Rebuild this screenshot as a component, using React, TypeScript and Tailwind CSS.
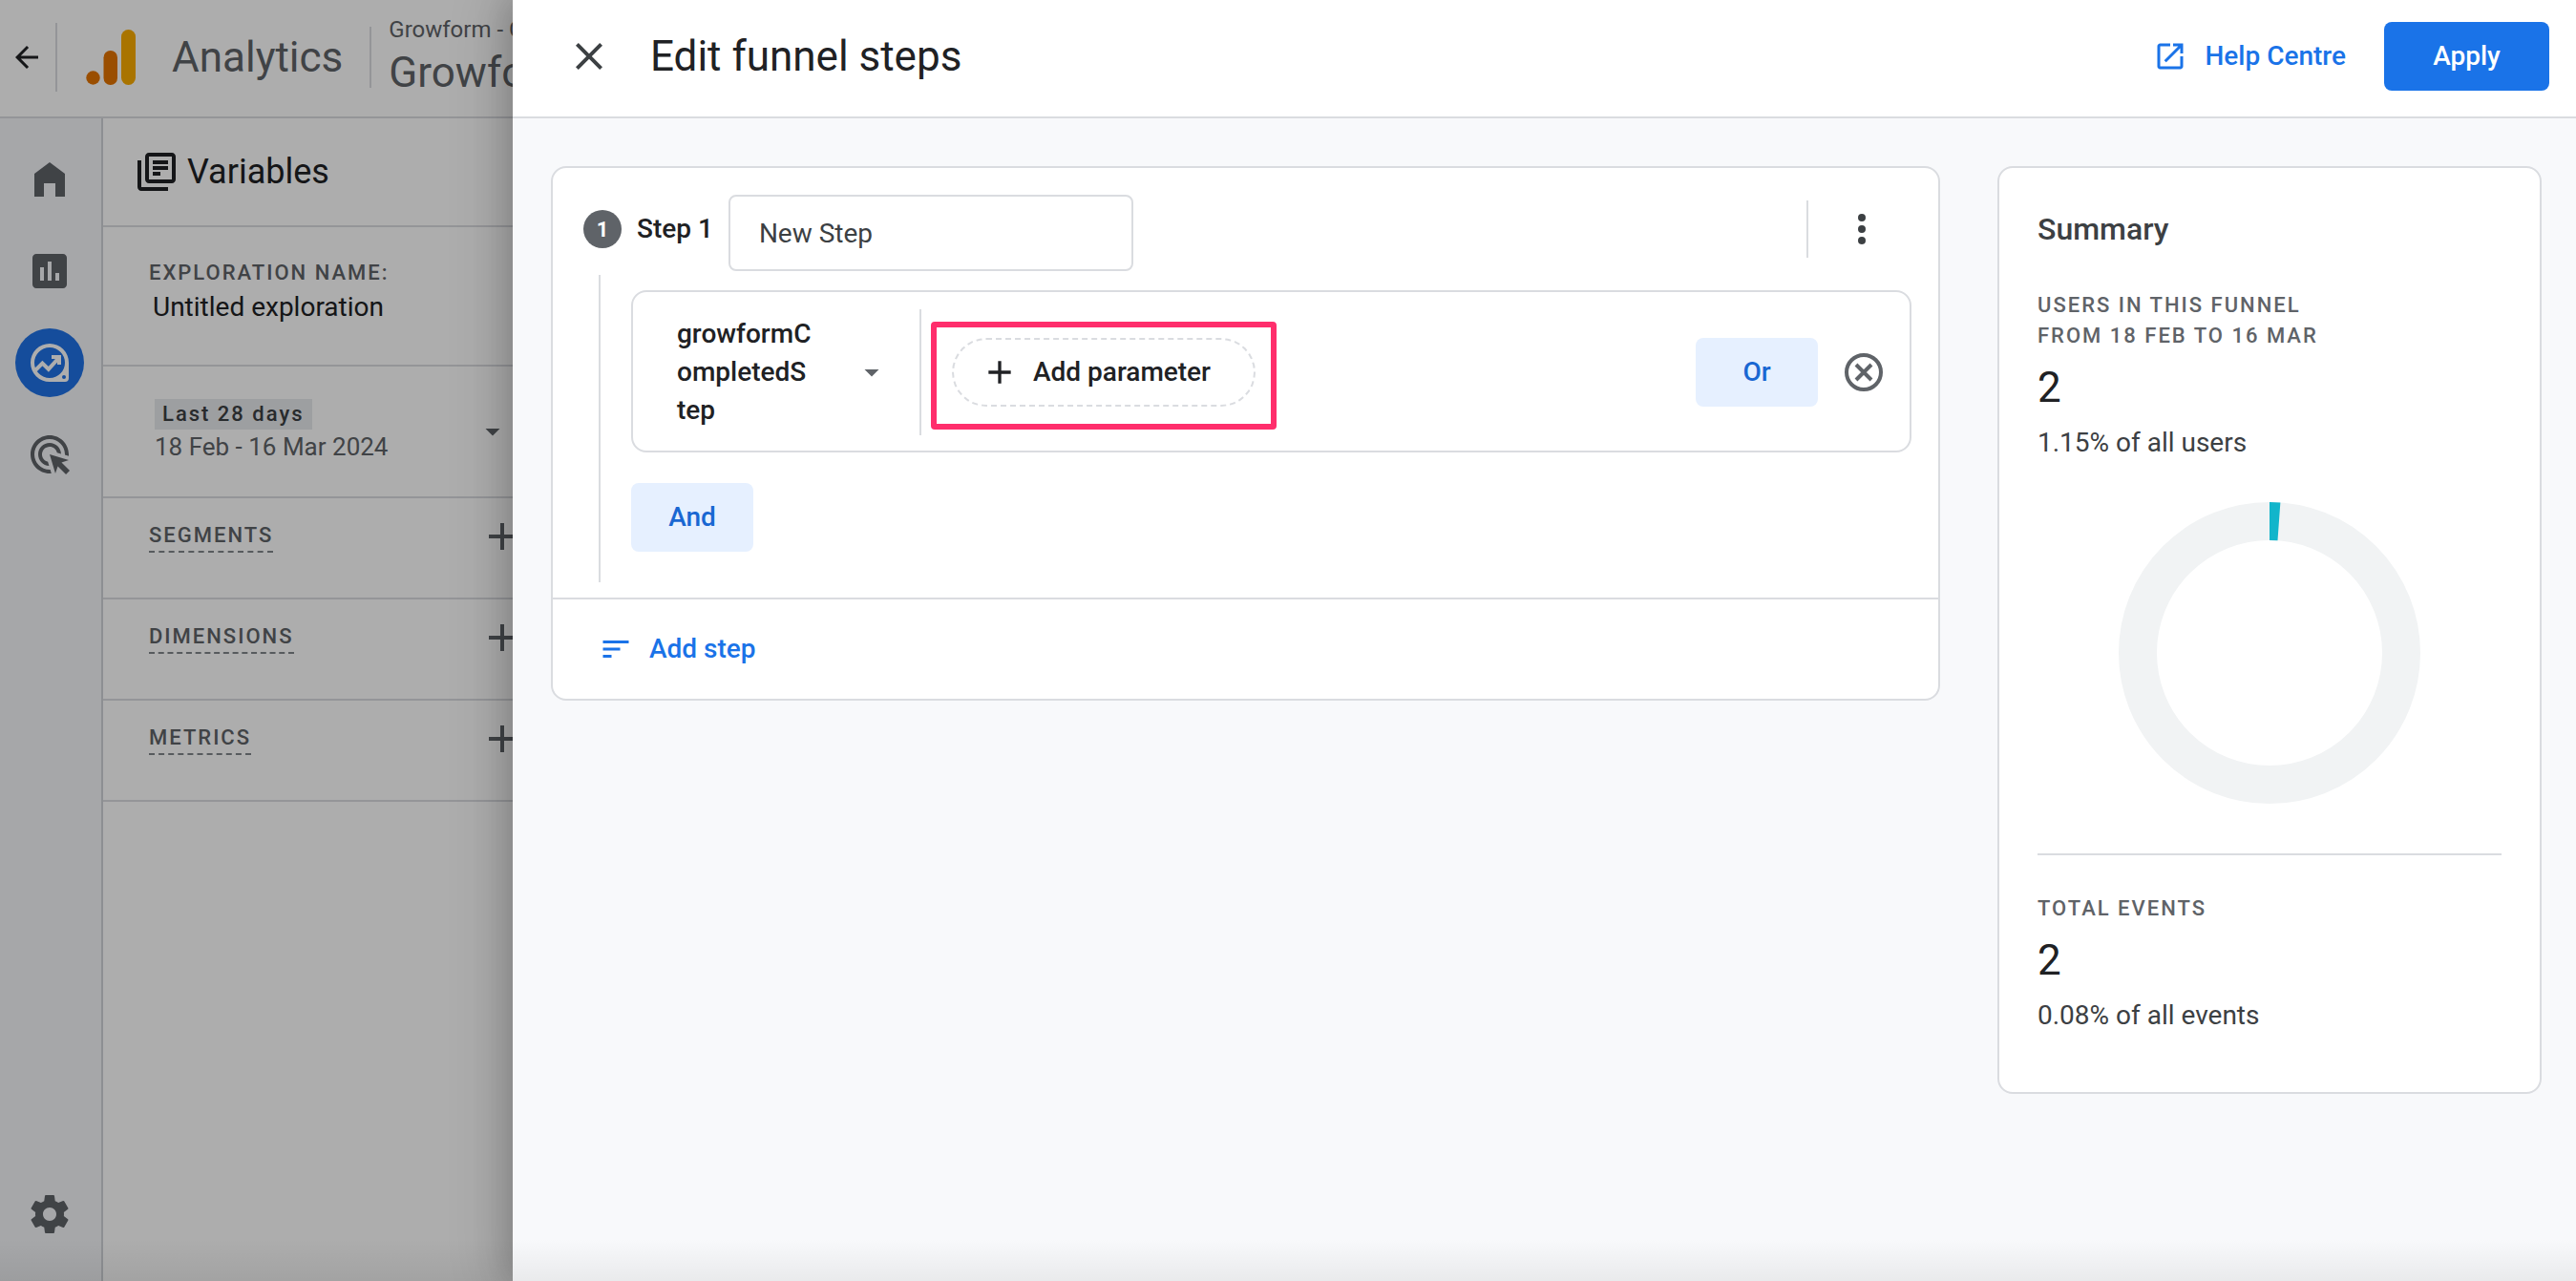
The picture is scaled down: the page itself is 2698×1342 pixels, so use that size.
import { type ReactNode, useState } from "react";

const icons = {
  back: "M20 11H7.83l5.59-5.59L12 4l-8 8 8 8 1.41-1.41L7.83 13H20v-2z",
  home: "M4 21V9l8-6 8 6v12h-5v-7H9v7z",
  chart:
    "M19 3H5c-1.1 0-2 .9-2 2v14c0 1.1.9 2 2 2h14c1.1 0 2-.9 2-2V5c0-1.1-.9-2-2-2zM9 17H7v-7h2v7zm4 0h-2V7h2v10zm4 0h-2v-4h2v4z",
  target:
    "M11.71 17.99C8.53 17.84 6 15.22 6 12c0-3.31 2.69-6 6-6 3.22 0 5.84 2.53 5.99 5.71l-2.1-.63C15.48 9.31 13.89 8 12 8c-2.21 0-4 1.79-4 4 0 1.89 1.31 3.48 3.08 3.89l.63 2.1zM22 12c0 .3-.01.6-.04.9l-1.97-.59c.01-.1.01-.21.01-.31 0-4.42-3.58-8-8-8s-8 3.58-8 8 3.58 8 8 8c.1 0 .21 0 .31-.01l.59 1.97c-.3.03-.6.04-.9.04-5.52 0-10-4.48-10-10S6.48 2 12 2s10 4.48 10 10zm-3.77 4.26L22 15l-10-3 3 10 1.26-3.77 4.27 4.27 1.98-1.98-4.28-4.26z",
  settings:
    "M19.43 12.98c.04-.32.07-.64.07-.98s-.03-.66-.07-.98l2.11-1.65c.19-.15.24-.42.12-.64l-2-3.46c-.12-.22-.39-.3-.61-.22l-2.49 1c-.52-.4-1.08-.73-1.69-.98l-.38-2.65C14.46 2.18 14.25 2 14 2h-4c-.25 0-.46.18-.49.42l-.38 2.65c-.61.25-1.17.59-1.69.98l-2.49-1c-.23-.09-.49 0-.61.22l-2 3.46c-.13.22-.07.49.12.64l2.11 1.65c-.04.32-.07.65-.07.98s.03.66.07.98l-2.11 1.65c-.19.15-.24.42-.12.64l2 3.46c.12.22.39.3.61.22l2.49-1c.52.4 1.08.73 1.69.98l.38 2.65c.03.24.24.42.49.42h4c.25 0 .46-.18.49-.42l.38-2.65c.61-.25 1.17-.59 1.69-.98l2.49 1c.23.09.49 0 .61-.22l2-3.46c.12-.22.07-.49-.12-.64l-2.11-1.65zM12 15.5c-1.93 0-3.5-1.57-3.5-3.5s1.57-3.5 3.5-3.5 3.5 1.57 3.5 3.5-1.57 3.5-3.5 3.5z",
  variables:
    "M4 6H2v14c0 1.1.9 2 2 2h14v-2H4V6zM20 2H8c-1.1 0-2 .9-2 2v12c0 1.1.9 2 2 2h12c1.1 0 2-.9 2-2V4c0-1.1-.9-2-2-2zm0 14H8V4h12v12zM10 6h8v2h-8zM10 9h8v2h-8zM10 12h4v2h-4z",
  plus: "M19 13h-6v6h-2v-6H5v-2h6V5h2v6h6z",
  close:
    "M19 6.41L17.59 5 12 10.59 6.41 5 5 6.41 10.59 12 5 17.59 6.41 19 12 13.41 17.59 19 19 17.59 13.41 12z",
  external:
    "M19 19H5V5h7V3H5c-1.11 0-2 .9-2 2v14c0 1.1.89 2 2 2h14c1.1 0 2-.9 2-2v-7h-2v7zM14 3v2h3.59l-9.83 9.83 1.41 1.41L19 6.41V10h2V3h-7z",
  caret: "M7 10l5 5 5-5z",
  more: "M12 8a2 2 0 1 0 0-4 2 2 0 0 0 0 4zm0 6a2 2 0 1 0 0-4 2 2 0 0 0 0 4zm0 6a2 2 0 1 0 0-4 2 2 0 0 0 0 4z",
  list: "M3 18h6v-2H3v2zM3 6v2h18V6H3zm0 7h12v-2H3v2z"
};

function Icon({
  name,
  className = "size-12"
}: {
  name: keyof typeof icons;
  className?: string;
}): ReactNode {
  return (
    <svg
      viewBox="0 0 24 24"
      fill="currentColor"
      aria-hidden="true"
      className={`shrink-0 ${className}`}
    >
      <path d={icons[name]} />
    </svg>
  );
}

export default function App(): ReactNode {
  return (
    <div className="relative h-screen w-full overflow-hidden bg-white font-['Roboto',sans-serif] text-[#202124]">
      <div className="flex h-full flex-col">
        <AppHeader />
        <div className="flex min-h-0 flex-1">
          <NavRail />
          <VariablesPanel />
        </div>
      </div>
      <div className="absolute inset-0 bg-black/32" />
      <FunnelDrawer />
      <div className="pointer-events-none absolute inset-x-0 bottom-0 h-11 bg-gradient-to-t from-black/6 to-transparent" />
    </div>
  );
}

function AppHeader(): ReactNode {
  return (
    <header className="flex h-[124px] shrink-0 items-center border-b-2 border-[#dadce0] pb-0.5 whitespace-nowrap">
      <button aria-label="Back" className="ml-2.5">
        <Icon name="back" className="size-9" />
      </button>
      <div className="ml-3 h-[72px] w-0.5 bg-[#dadce0]" />
      <svg viewBox="0 0 52 58" className="ml-[30px] h-[58px] w-[52px]">
        <circle cx="7.5" cy="50.5" r="7.2" fill="#e37400" />
        <rect x="18.5" y="22" width="14.5" height="36" rx="7.2" fill="#e37400" />
        <rect x="37" y="0" width="15" height="58" rx="7.5" fill="#f9ab00" />
      </svg>
      <span className="ml-[38px] text-[44px] text-[#5f6368]">Analytics</span>
      <div className="ml-7 h-16 w-0.5 bg-[#dadce0]" />
      <div className="ml-[18px] text-[#5f6368]">
        <p className="text-2xl leading-8">Growform - GA4</p>
        <p className="text-[44px] leading-[58px]">Growform</p>
      </div>
    </header>
  );
}

function NavRail(): ReactNode {
  return (
    <nav className="flex w-[108px] shrink-0 flex-col items-center border-r-2 border-[#d0d3d8] bg-[#f5f6fa] pt-7 pr-0.5 pb-[46px] text-[#5f6368]">
      <button aria-label="Home" className="flex h-[72px] items-center">
        <Icon name="home" />
      </button>
      <button aria-label="Reports" className="mt-6 flex h-[72px] items-center">
        <Icon name="chart" />
      </button>
      <button
        aria-label="Explore"
        className="mt-6 flex size-[72px] items-center justify-center rounded-full bg-[#1f72e6] text-white"
      >
        <svg viewBox="0 0 24 24" className="size-12" fill="none">
          <path
            fill="currentColor"
            fillRule="evenodd"
            d="M12 2a10 10 0 1 0 0 20h8a2 2 0 0 0 2-2v-8A10 10 0 0 0 12 2zm0 2a8 8 0 1 1 0 16 8 8 0 0 1 0-16zM19.5 18.5a1 1 0 1 1 0 2 1 1 0 0 1 0-2z"
          />
          <path
            stroke="currentColor"
            strokeWidth="2"
            d="M4.5 16l3.7-3.7 3.2 3.1 5.4-6"
          />
          <path fill="currentColor" d="M13 8h5v5h-2v-3h-3z" />
        </svg>
      </button>
      <button aria-label="Advertising" className="mt-6 flex h-[72px] items-center">
        <Icon name="target" />
      </button>
      <button aria-label="Admin" className="mt-auto">
        <Icon name="settings" />
      </button>
    </nav>
  );
}

function VariablesPanel(): ReactNode {
  const [name, setName] = useState("Untitled exploration");

  return (
    <aside className="w-[470px] shrink-0">
      <div className="flex h-[114px] items-center gap-2 border-b-2 border-[#dadce0] pl-8">
        <Icon name="variables" />
        <h2 className="text-4xl">Variables</h2>
      </div>
      <div className="h-[146px] border-b-2 border-[#dadce0] pt-8 pl-12">
        <label
          htmlFor="exploration-name"
          className="block text-[22px] leading-8 font-medium tracking-[2px] text-[#5f6368] uppercase"
        >
          Exploration name:
        </label>
        <input
          id="exploration-name"
          value={name}
          onChange={(e) => setName(e.target.value)}
          className="block h-10 w-80 pl-1 text-[28px] outline-none"
        />
      </div>
      <button className="flex h-[138px] w-full items-center justify-between border-b-2 border-[#dadce0] pr-11 pl-[54px] text-left">
        <span className="flex flex-col items-start">
          <span className="bg-[#e8eaed] px-2 text-[22px] leading-8 font-medium tracking-[2px] text-[#3c4043]">
            Last 28 days
          </span>
          <span className="text-[26px] leading-9 text-[#5f6368]">
            18 Feb - 16 Mar 2024
          </span>
        </span>
        <Icon name="caret" className="size-9 text-[#5f6368]" />
      </button>
      {["Segments", "Dimensions", "Metrics"].map((section) => (
        <div
          key={section}
          className="h-[106px] border-b-2 border-[#dadce0] pt-4 pr-7 pl-12"
        >
          <div className="flex items-center justify-between text-[#5f6368]">
            <h3 className="border-b-2 border-dashed border-[#80868b] text-[22px] leading-8 font-medium tracking-[2px] uppercase">
              {section}
            </h3>
            <button aria-label={`Add ${section}`}>
              <Icon name="plus" />
            </button>
          </div>
        </div>
      ))}
    </aside>
  );
}

function FunnelDrawer(): ReactNode {
  return (
    <div
      role="dialog"
      aria-label="Edit funnel steps"
      className="absolute inset-y-0 right-0 left-[537px] flex flex-col bg-[#f8f9fb] shadow-[0_0_60px_10px_rgba(0,0,0,0.12),0_0_36px_4px_rgba(0,0,0,0.2)]"
    >
      <header className="flex h-[124px] shrink-0 items-center border-b-2 border-[#dadce0] bg-white pr-7 pb-1 pl-14">
        <button aria-label="Close" className="text-[#3c4043]">
          <Icon name="close" />
        </button>
        <h1 className="ml-10 text-[44px]">Edit funnel steps</h1>
        <a
          href="#help"
          className="ml-auto flex items-center gap-[18px] text-[28px] font-medium text-[#1a73e8]"
        >
          <Icon name="external" className="size-9" />
          Help Centre
        </a>
        <button className="ml-10 h-[72px] w-[173px] rounded-lg bg-[#1a73e8] text-[28px] font-medium text-white">
          Apply
        </button>
      </header>
      <main className="flex items-start gap-[60px] pt-[50px] pr-9 pl-10">
        <StepCard />
        <SummaryCard />
      </main>
    </div>
  );
}

function StepCard(): ReactNode {
  const [stepName, setStepName] = useState("New Step");

  return (
    <section className="min-w-0 flex-1 rounded-2xl border-2 border-[#dadce0] bg-white">
      <div className="flex items-center pt-7 pr-14 pl-8">
        <div className="flex items-center gap-4 pb-2">
          <span className="flex size-10 items-center justify-center rounded-full bg-[#5f6368] text-[22px] font-bold text-white">
            1
          </span>
          <label htmlFor="step-name" className="text-[28px] font-medium">
            Step 1
          </label>
        </div>
        <input
          id="step-name"
          value={stepName}
          onChange={(e) => setStepName(e.target.value)}
          className="ml-4 h-20 w-[424px] rounded-lg border-2 border-[#dadce0] px-[30px] text-[28px] text-[#3c4043] outline-none"
        />
        <div className="ml-auto flex items-center gap-8 pb-2">
          <div className="h-[60px] w-0.5 bg-[#dadce0]" />
          <button aria-label="More options" className="text-[#3c4043]">
            <Icon name="more" />
          </button>
        </div>
      </div>

      <div className="mt-1 mr-7 mb-4 ml-12 border-l-2 border-[#dadce0] pt-4 pb-8 pl-8">
        <div className="flex items-center rounded-2xl border-2 border-[#dadce0] pt-[18px] pr-6 pb-4 pl-[46px]">
          <button className="flex items-center gap-11 text-left text-[28px] leading-10 font-medium">
            <span className="w-[142px] break-all">growformCompletedStep</span>
            <Icon name="caret" className="size-9 text-[#5f6368]" />
          </button>
          <div className="ml-8 h-[132px] w-0.5 bg-[#dadce0]" />
          <div className="relative ml-8">
            <button className="flex h-[72px] w-[318px] items-center gap-[15px] rounded-full border-2 border-dashed border-[#dadce0] pl-7 text-[28px] font-medium">
              <Icon name="plus" className="size-10" />
              Add parameter
            </button>
            <div className="pointer-events-none absolute -inset-x-[22px] -top-[17px] -bottom-6 rounded-sm border-6 border-[#ff2e6c]" />
          </div>
          <button className="ml-auto h-[72px] w-32 rounded-lg bg-[#e6f0ff] text-[28px] font-medium text-[#1967d2]">
            Or
          </button>
          <button aria-label="Remove condition" className="ml-6 text-[#5f6368]">
            <svg
              viewBox="0 0 24 24"
              fill="none"
              stroke="currentColor"
              strokeWidth="2"
              className="size-12"
            >
              <circle cx="12" cy="12" r="9" />
              <path d="M8 8l8 8M16 8l-8 8" />
            </svg>
          </button>
        </div>
        <button className="mt-8 h-[72px] w-32 rounded-lg bg-[#e6f0ff] text-[28px] font-medium text-[#1967d2]">
          And
        </button>
      </div>

      <div className="flex h-[106px] items-center border-t-2 border-[#dadce0] pl-12">
        <button className="flex items-center gap-[17px] text-[28px] font-medium text-[#1a73e8]">
          <Icon name="list" className="size-9" />
          Add step
        </button>
      </div>
    </section>
  );
}

function SummaryCard(): ReactNode {
  return (
    <section className="w-[570px] shrink-0 rounded-2xl border-2 border-[#dadce0] bg-white px-10 pt-11 pb-[60px]">
      <h2 className="text-[32px] leading-10 font-medium text-[#3c4043]">
        Summary
      </h2>
      <div className="mt-11">
        <Stat value="2" share="1.15% of all users">
          Users in this funnel
          <br />
          from 18 Feb to 16 Mar
        </Stat>
      </div>
      <Donut percent={1.15} />
      <div className="mt-[52px] border-t-2 border-[#dadce0] pt-10">
        <Stat value="2" share="0.08% of all events">
          Total events
        </Stat>
      </div>
    </section>
  );
}

function Stat({
  value,
  share,
  children
}: {
  value: string;
  share: string;
  children: ReactNode;
}): ReactNode {
  return (
    <>
      <h3 className="text-[22px] leading-8 font-medium tracking-[2px] text-[#5f6368] uppercase">
        {children}
      </h3>
      <p className="mt-3.5 text-[44px] leading-12">{value}</p>
      <p className="mt-3.5 text-[28px] leading-10 text-[#3c4043]">{share}</p>
    </>
  );
}

function Donut({ percent }: { percent: number }): ReactNode {
  const radius = 138;
  const length = 2 * Math.PI * radius;

  return (
    <svg
      viewBox="0 0 316 316"
      fill="none"
      className="mx-auto mt-[42px] size-[316px]"
    >
      <circle cx="158" cy="158" r={radius} stroke="#f1f3f4" strokeWidth="40" />
      <circle
        cx="158"
        cy="158"
        r={radius}
        stroke="#12b5cb"
        strokeWidth="40"
        strokeDasharray={`${(length * percent) / 100} ${length}`}
        transform="rotate(-90 158 158)"
      />
    </svg>
  );
}
